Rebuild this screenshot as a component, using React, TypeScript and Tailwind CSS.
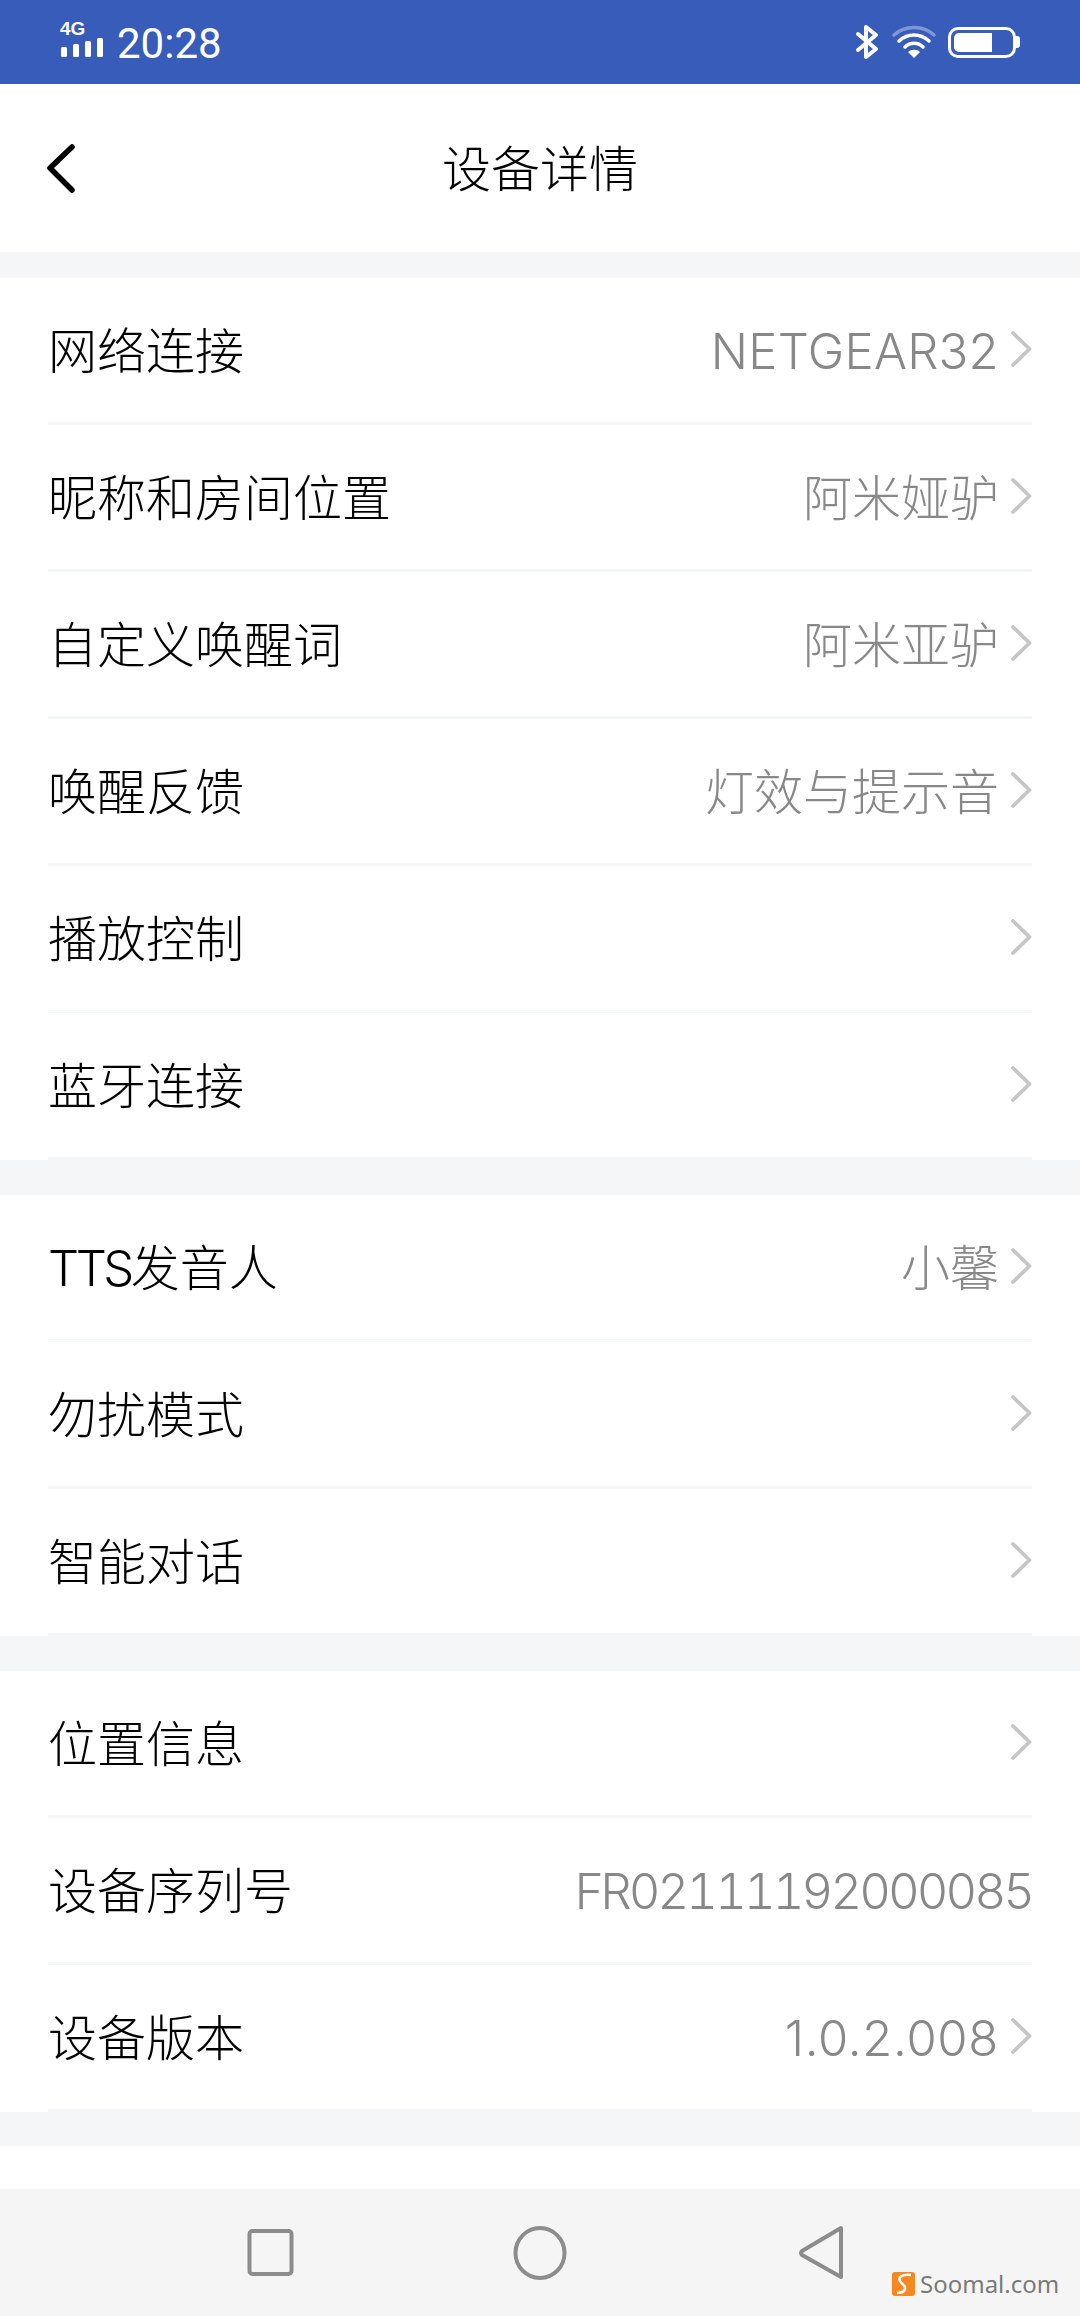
const font = { fontFamily: 'Inter, "Noto Sans CJK SC", sans-serif' };

function Chevron() {
  return (
    <svg width="21" height="36" viewBox="0 0 21 36" className="mb-[2px] ml-[12px] shrink-0" fill="none">
      <path d="M2 2 L18.5 18 L2 34" stroke="#c6c6c6" strokeWidth="3.8" strokeLinecap="round" strokeLinejoin="round" />
    </svg>
  );
}

function Row({ label, prefix, value, arrow = true, valueClass = "" }: { label: string; prefix?: string; value?: string; arrow?: boolean; valueClass?: string }) {
  return (
    <div className="mx-[48px] flex h-[147px] items-center justify-between border-b-[3px] border-[#f5f6f7]">
      <span className="pt-[2px] text-[49px] font-light leading-none text-[#000000]">
        {prefix && <span className="tracking-[-3.5px]">{prefix}</span>}
        {label}
      </span>
      <div className="flex items-center">
        {value && (
          <span className={`pt-[2px] text-[49px] font-light leading-none text-[#888888] ${valueClass}`}>
            {value}
          </span>
        )}
        {arrow && <Chevron />}
      </div>
    </div>
  );
}

function StatusBar() {
  return (
    <div className="flex h-[84px] items-center justify-between bg-[#375cb9] pl-[60px] pr-[60px] text-white">
      <div className="flex items-center gap-[13px]">
        <div className="relative h-[38px] w-[44px]">
          <span className="absolute left-0 top-[-4px] text-[19px] font-bold leading-[20px]" style={{ fontFamily: '"Liberation Sans", sans-serif' }}>4G</span>
          <svg width="44" height="24" viewBox="0 0 44 24" className="absolute left-0 top-[14px]">
            <rect x="1" y="10" width="6" height="10" rx="1.5" fill="white" />
            <rect x="13" y="7" width="6" height="13" rx="1.5" fill="white" />
            <rect x="25" y="4" width="6" height="16" rx="1.5" fill="white" />
            <rect x="37" y="1" width="6" height="19" rx="1.5" fill="white" />
          </svg>
        </div>
        <span className="pt-[3px] text-[42px] leading-none" style={{ fontFamily: 'Roboto, sans-serif' }}>20:28</span>
      </div>
      <div className="flex items-center gap-[11px]">
        <svg width="24" height="36" viewBox="0 0 24 36" fill="none" stroke="white" strokeWidth="4" strokeLinecap="round" strokeLinejoin="round" className="mr-px">
          <path d="M3 10 L21 25 L11 33 V3 L21 11 L3 26" />
        </svg>
        <svg width="46" height="34" viewBox="0 0 46 34" fill="none" strokeLinecap="round">
          <path d="M3 10 C14 0 32 0 43 10" stroke="#7f97d6" strokeWidth="3.5" />
          <path d="M8 16 C17 8 29 8 38 16" stroke="white" strokeWidth="3.5" />
          <path d="M14 22 C19 17 27 17 32 22" stroke="white" strokeWidth="3.5" />
          <path d="M17 27 C20 24 26 24 29 27 L23 33 Z" fill="white" />
        </svg>
        <div className="flex items-center">
          <div className="h-[31px] w-[68px] rounded-[10px] border-[3px] border-white p-[3px]">
            <div className="h-full w-[38px] rounded-l-[5px] bg-white" />
          </div>
          <div className="h-[12px] w-[4px] rounded-r-[3px] bg-white" />
        </div>
      </div>
    </div>
  );
}

function Header() {
  return (
    <div className="relative flex h-[168px] items-center justify-center bg-white">
      <svg width="32" height="52" viewBox="0 0 32 52" className="absolute left-[45px] top-[59px]" fill="none">
        <path d="M27 4 L5 25 L27 47" stroke="#000" strokeWidth="5.5" strokeLinecap="round" strokeLinejoin="round" />
      </svg>
      <span className="pt-[2px] text-[49px] font-light leading-none text-[#000000]">设备详情</span>
    </div>
  );
}

function Nav() {
  return (
    <div className="relative h-[127px] bg-[#f5f5f5]">
      <svg width="1080" height="127" viewBox="0 0 1080 127" fill="none" className="absolute left-0 top-0">
        <rect x="249.5" y="42" width="42" height="43" rx="3" stroke="#8c8c8c" strokeWidth="4" />
        <ellipse cx="540" cy="64" rx="24.5" ry="25" stroke="#8c8c8c" strokeWidth="4" />
        <path d="M841 39 L802 62 Q800 64 802 66 L841 88 Z" stroke="#8c8c8c" strokeWidth="4" strokeLinejoin="round" />
      </svg>
      <div className="absolute left-[892px] top-[83px] flex items-center gap-[5px]">
        <svg width="23" height="24" viewBox="0 0 23 24" className="shrink-0">
          <rect width="23" height="24" rx="3" fill="#f5891f" />
          <path d="M19 3 C10 2 6 5 8 9 C10 13 14 13 13 17 C12 20 8 21 5 21" stroke="white" strokeWidth="2.5" fill="none" />
        </svg>
        <span className="text-[24px] leading-none text-[#7a7a7a]" style={{ fontFamily: '"Noto Sans", sans-serif' }}>Soomal.com</span>
      </div>
    </div>
  );
}

export default function App() {
  return (
    <div className="flex h-[2316px] w-[1080px] flex-col overflow-hidden bg-[#f5f6f8]" style={font}>
      <StatusBar />
      <Header />
      <div className="mt-[26px] bg-white">
        <Row label="网络连接" value="NETGEAR32" valueClass="tracking-[0.3px]" />
        <Row label="昵称和房间位置" value="阿米娅驴" />
        <Row label="自定义唤醒词" value="阿米亚驴" />
        <Row label="唤醒反馈" value="灯效与提示音" />
        <Row label="播放控制" />
        <Row label="蓝牙连接" />
      </div>
      <div className="mt-[35px] bg-white">
        <Row prefix="TTS" label="发音人" value="小馨" />
        <Row label="勿扰模式" />
        <Row label="智能对话" />
      </div>
      <div className="mt-[35px] bg-white">
        <Row label="位置信息" />
        <Row label="设备序列号" value="FR02111192000085" arrow={false} valueClass="tabular-nums tracking-[-2.9px]" />
        <Row label="设备版本" value="1.0.2.008" valueClass="tracking-[0.7px]" />
      </div>
      <div className="mt-[34px] h-[43px] bg-white" />
      <Nav />
    </div>
  );
}
